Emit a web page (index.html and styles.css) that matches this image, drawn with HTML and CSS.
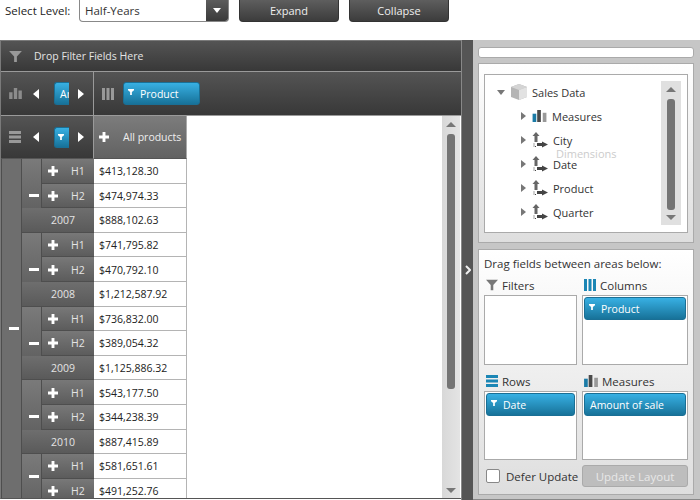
FILE: index.html
```html
<!DOCTYPE html>
<html>
<head>
    <title>Pivot Grid</title>
    <link rel="stylesheet" href="styles.css">
</head>
<body>
    <svg class="defs" width="0" height="0">
        <symbol id="funnel" viewBox="0 0 14 12"><path d="M0 0H14L8.5 6V12H5.500V6Z"/></symbol>
        <symbol id="bars" viewBox="0 0 15 13"><path d="M0 5H4V13H0ZM5.500 0H9.500V13H5.500ZM11 3H15V13H11Z"/></symbol>
        <symbol id="cols" viewBox="0 0 12 12"><path d="M0 0H3V12H0ZM4.500 0H7.500V12H4.500ZM9 0H12V12H9Z"/></symbol>
        <symbol id="rows" viewBox="0 0 12 12"><path d="M0 0H12V3H0ZM0 4.500H12V7.500H0ZM0 9H12V12H0Z"/></symbol>
        <symbol id="plus" viewBox="0 0 9 9"><path d="M3.200 0H5.800V3.200H9V5.800H5.800V9H3.200V5.800H0V3.200H3.200Z"/></symbol>
        <symbol id="left" viewBox="0 0 6 10"><path d="M6 0V10L0 5Z"/></symbol>
        <symbol id="right" viewBox="0 0 6 10"><path d="M0 0V10L6 5Z"/></symbol>
        <symbol id="tag" viewBox="0 0 7 7"><path d="M0 0H7V1.500L4.500 3.500V7H2.500V3.500L0 1.500Z"/></symbol>
        <symbol id="dim" viewBox="0 0 16 16">
            <path d="M4 0L7.500 4H5.500V10H2.500V4H.5Z" fill="#666"/>
            <path d="M10 9.500L16 12.500L10 15.500V14H5V11H10Z" fill="#444"/>
            <path d="M2 11.500V14.500H4.500" fill="none" stroke="#444" stroke-dasharray="1 1"/>
        </symbol>
    </svg>

    <div class="toolbar">
        <span class="level-label">Select Level:</span>
        <div class="combo">
            <span class="combo-text">Half-Years</span>
            <span class="combo-btn"><i></i></span>
        </div>
        <button class="dark-btn">Expand</button>
        <button class="dark-btn">Collapse</button>
    </div>

    <div class="main">
        <div class="pivot">
            <div class="bar filter-bar">
                <svg class="ico-filter"><use href="#funnel"/></svg>
                <span>Drop Filter Fields Here</span>
            </div>
            <div class="bar header-bar">
                <div class="corner">
                    <svg class="ico-bars"><use href="#bars"/></svg>
                    <svg class="nav nav-l"><use href="#left"/></svg>
                    <div class="chip chip-clip"><span>Amount of sale</span></div>
                    <svg class="nav nav-r"><use href="#right"/></svg>
                </div>
                <div class="cols-area">
                    <svg class="ico-cols"><use href="#cols"/></svg>
                    <div class="chip chip-product"><svg class="tag"><use href="#tag"/></svg>Product</div>
                </div>
            </div>
            <div class="table-wrap">
                <div class="table">
                    <div class="head-row">
                        <div class="corner corner-rows">
                            <svg class="ico-rows"><use href="#rows"/></svg>
                            <svg class="nav nav-l"><use href="#left"/></svg>
                            <div class="chip chip-clip chip-icon"><svg class="tag"><use href="#tag"/></svg></div>
                            <svg class="nav nav-r"><use href="#right"/></svg>
                        </div>
                        <div class="all-products"><svg class="plus"><use href="#plus"/></svg><span>All products</span></div>
                    </div>
                    <div class="grid">
                        <div class="cell total-cell"><i class="minus"></i></div>

                        <div class="cell group"><i class="minus"></i></div>
                        <div class="cell half"><svg class="plus"><use href="#plus"/></svg><span>H1</span></div>
                        <div class="val">$413,128.30</div>
                        <div class="cell half"><svg class="plus"><use href="#plus"/></svg><span>H2</span></div>
                        <div class="val">$474,974.33</div>
                        <div class="cell year">2007</div>
                        <div class="val">$888,102.63</div>

                        <div class="cell group"><i class="minus"></i></div>
                        <div class="cell half"><svg class="plus"><use href="#plus"/></svg><span>H1</span></div>
                        <div class="val">$741,795.82</div>
                        <div class="cell half"><svg class="plus"><use href="#plus"/></svg><span>H2</span></div>
                        <div class="val">$470,792.10</div>
                        <div class="cell year">2008</div>
                        <div class="val">$1,212,587.92</div>

                        <div class="cell group"><i class="minus"></i></div>
                        <div class="cell half"><svg class="plus"><use href="#plus"/></svg><span>H1</span></div>
                        <div class="val">$736,832.00</div>
                        <div class="cell half"><svg class="plus"><use href="#plus"/></svg><span>H2</span></div>
                        <div class="val">$389,054.32</div>
                        <div class="cell year">2009</div>
                        <div class="val">$1,125,886.32</div>

                        <div class="cell group"><i class="minus"></i></div>
                        <div class="cell half"><svg class="plus"><use href="#plus"/></svg><span>H1</span></div>
                        <div class="val">$543,177.50</div>
                        <div class="cell half"><svg class="plus"><use href="#plus"/></svg><span>H2</span></div>
                        <div class="val">$344,238.39</div>
                        <div class="cell year">2010</div>
                        <div class="val">$887,415.89</div>

                        <div class="cell group group-last"><i class="minus"></i></div>
                        <div class="cell half"><svg class="plus"><use href="#plus"/></svg><span>H1</span></div>
                        <div class="val">$581,651.61</div>
                        <div class="cell half"><svg class="plus"><use href="#plus"/></svg><span>H2</span></div>
                        <div class="val">$491,252.76</div>
                    </div>
                </div>
                <div class="vscroll">
                    <i class="arrow-up"></i>
                    <div class="thumb"></div>
                    <i class="arrow-down"></i>
                </div>
            </div>
        </div>

        <div class="splitter"><svg class="split-arrow" viewBox="0 0 6 10"><path d="M1 1L5 5L1 9" fill="none" stroke="#eee" stroke-width="2"/></svg></div>

        <div class="side">
            <div class="search"></div>
            <div class="panel tree-panel">
                <div class="tree-box">
                    <div class="tree">
                        <div class="node root">
                            <i class="tri-open"></i>
                            <svg class="cube" viewBox="0 0 16 16">
                                <path d="M8 0L16 3V13L8 16L0 13V3Z" fill="#b5b5b5"/>
                                <path d="M8 0L16 3L8 6L0 3Z" fill="#d4d4d4"/>
                                <path d="M8 6L16 3V13L8 16Z" fill="#e2e2e2"/>
                            </svg>
                            <span>Sales Data</span>
                        </div>
                        <div class="node">
                            <i class="tri"></i>
                            <svg class="measure-ico" viewBox="0 0 15 13">
                                <path d="M0 4H4V13H0Z" fill="#1b7ba6"/>
                                <path d="M5 0H9V13H5Z" fill="#4a4a4a"/>
                                <path d="M11 3H15V13H11Z" fill="#999"/>
                            </svg>
                            <span class="m">Measures</span>
                        </div>
                        <div class="node"><i class="tri"></i><svg class="dim"><use href="#dim"/></svg><span>City</span></div>
                        <div class="node"><i class="tri"></i><svg class="dim"><use href="#dim"/></svg><span>Date</span></div>
                        <div class="node"><i class="tri"></i><svg class="dim"><use href="#dim"/></svg><span>Product</span></div>
                        <div class="node"><i class="tri"></i><svg class="dim"><use href="#dim"/></svg><span>Quarter</span></div>
                    </div>
                    <div class="tree-scroll">
                        <i class="arrow-up"></i>
                        <div class="thumb"></div>
                        <i class="arrow-down"></i>
                    </div>
                    <span class="ghost">Dimensions</span>
                </div>
            </div>
            <div class="panel fields-panel">
                <div class="drag-title">Drag fields between areas below:</div>
                <div class="areas">
                    <div class="area">
                        <div class="area-title"><svg class="t-filter"><use href="#funnel"/></svg>Filters</div>
                        <div class="area-box"></div>
                    </div>
                    <div class="area">
                        <div class="area-title"><svg class="t-cols"><use href="#cols"/></svg>Columns</div>
                        <div class="area-box"><div class="chip field"><svg class="tag"><use href="#tag"/></svg>Product</div></div>
                    </div>
                    <div class="area">
                        <div class="area-title"><svg class="t-rows"><use href="#rows"/></svg>Rows</div>
                        <div class="area-box"><div class="chip field"><svg class="tag"><use href="#tag"/></svg>Date</div></div>
                    </div>
                    <div class="area">
                        <div class="area-title"><svg class="t-meas" viewBox="0 0 15 13"><path d="M0 4H4V13H0Z" fill="#1b7ba6"/><path d="M5 0H9V13H5Z" fill="#4a4a4a"/><path d="M11 3H15V13H11Z" fill="#999"/></svg>Measures</div>
                        <div class="area-box"><div class="chip field field-plain">Amount of sale</div></div>
                    </div>
                </div>
                <div class="foot">
                    <label class="defer"><i class="check"></i>Defer Update</label>
                    <button class="update-btn">Update Layout</button>
                </div>
            </div>
        </div>
    </div>
</body>
</html>
```

FILE: styles.css
```css
* {
    box-sizing: border-box;
}
html, body {
    margin: 0;
    height: 500px;
    overflow: hidden;
}
body {
    background: #fff;
    color: #333;
    font-family: "Open Sans", "Noto Sans", Arial, sans-serif;
    font-size: 11.5px;
}
.defs {
    position: absolute;
}
i {
    display: block;
}

/* top bar */
.toolbar {
    height: 40px;
    display: flex;
    align-items: flex-start;
}
.level-label {
    width: 79px;
    padding: 3px 0 0 5px;
    color: #222;
}
.combo {
    width: 150px;
    height: 22px;
    display: flex;
    border: 1px solid #888;
    border-top: none;
    border-radius: 0 0 4px 4px;
    background: #fff;
    overflow: hidden;
}
.combo-text {
    flex: 1;
    padding: 3px 0 0 5px;
}
.combo-btn {
    width: 22px;
    background: linear-gradient(#5c5c5c, #3a3a3a);
    display: flex;
    align-items: center;
    justify-content: center;
}
.combo-btn i {
    border: 4px solid transparent;
    border-top: 5px solid #fff;
    border-bottom: none;
}
.dark-btn {
    width: 100px;
    height: 22px;
    margin-left: 10px;
    padding: 0;
    border: 1px solid #333;
    border-top: none;
    border-radius: 0 0 4px 4px;
    background: linear-gradient(#5e5e5e, #3c3c3c);
    color: #eee;
    font: inherit;
    font-size: 11px;
}

.main {
    display: flex;
    height: 460px;
}

/* pivot grid */
.pivot {
    width: 461px;
    height: 459px;
    flex: none;
    border: 1px solid #7a7a7a;
    border-bottom: 1px solid #555;
    border-right: none;
    display: flex;
    flex-direction: column;
    background: #fff;
    font-size: 10.5px;
}
.bar {
    display: flex;
    background: linear-gradient(#545454, #383838);
    color: #e4e4e4;
    border-bottom: 1px solid #9a9a9a;
}
.filter-bar {
    height: 31px;
    align-items: center;
}
.ico-filter {
    width: 13px;
    height: 11px;
    margin-left: 8px;
    fill: #999;
}
.filter-bar span {
    margin-left: 12px;
}
.header-bar {
    height: 44px;
}
.corner {
    width: 93px;
    flex: none;
    display: flex;
    align-items: center;
    border-right: 1px solid #9a9a9a;
}
.ico-bars {
    width: 15px;
    height: 11px;
    margin-left: 7px;
    fill: #8c8c8c;
}
.ico-rows {
    width: 12px;
    height: 12px;
    margin-left: 8px;
    fill: #999;
}
.nav {
    width: 6px;
    height: 10px;
    fill: #fff;
    flex: none;
}
.nav-l {
    margin-left: 10px;
}
.nav-r {
    margin-left: 9px;
}
.ico-rows + .nav-l {
    margin-left: 12px;
}
.chip {
    background: linear-gradient(#38b0e3, #177299);
    color: #fff;
    border: 1px solid #1a6f95;
    border-radius: 3px;
    display: flex;
    align-items: center;
    font-size: 10.5px;
}
.chip-clip {
    width: 15px;
    height: 23px;
    margin-left: 15px;
    overflow: hidden;
    border-radius: 3px 0 0 3px;
    border-right: none;
    padding-left: 5px;
    white-space: nowrap;
}
.chip-icon {
    height: 21px;
    padding-left: 3px;
}
.tag {
    width: 6px;
    height: 6px;
    fill: #fff;
    flex: none;
    margin-right: 6px;
    position: relative;
    top: -2px;
}
.chip-icon .tag {
    top: 0;
}
.cols-area {
    flex: 1;
    display: flex;
    align-items: center;
}
.ico-cols {
    width: 12px;
    height: 12px;
    margin-left: 8px;
    fill: #999;
}
.chip-product {
    width: 77px;
    height: 23px;
    margin-left: 9px;
    padding-left: 4px;
}
.table-wrap {
    flex: 1;
    display: flex;
    min-height: 0;
    overflow: hidden;
}
.table {
    flex: 1;
    overflow: hidden;
}
.head-row {
    display: flex;
    height: 43px;
}
.corner-rows {
    background: linear-gradient(#545454, #383838);
    border-bottom: 1px solid #555;
}
.all-products {
    width: 93px;
    display: flex;
    align-items: center;
    padding-left: 5px;
    background: linear-gradient(#7c7c7c, #626262);
    color: #eee;
    border-right: 1px solid #aaa;
    border-bottom: 1px solid #555;
}
.all-products span {
    margin-left: 14px;
    white-space: nowrap;
}
.plus {
    width: 10px;
    height: 10px;
    fill: #fff;
    flex: none;
}
.grid {
    display: grid;
    grid-template-columns: 20px 20px 53px 93px;
    grid-template-rows: repeat(14, 24.6px);
    grid-auto-flow: dense;
}
.cell {
    display: flex;
    align-items: center;
    color: #e4e4e4;
    border-left: 1px solid #4e4e4e;
    border-bottom: 1px solid #4e4e4e;
}
.total-cell {
    grid-column: 1;
    grid-row: 1 / span 14;
    justify-content: center;
    padding: 0 0 6px 4px;
    background: #6e6e6e;
    border-bottom: none;
}
.group {
    grid-column: 2;
    grid-row: span 2;
    justify-content: center;
    padding: 24px 0 0 4px;
    background: linear-gradient(#7a7a7a, #636363);
    border-bottom: none;
}
.group-last {
    padding: 0 0 5px 4px;
}
.half {
    grid-column: 3;
    padding: 1px 0 0 6px;
    background: linear-gradient(#787878, #5c5c5c);
}
.half span {
    margin-left: 13px;
}
.year {
    grid-column: 2 / span 2;
    padding: 1px 0 0 29px;
    background: linear-gradient(#6e6e6e, #5a5a5a);
}
.val {
    grid-column: 4;
    display: flex;
    align-items: center;
    padding: 1px 0 0 5px;
    border-bottom: 1px solid #b4b4b4;
    border-right: 1px solid #b4b4b4;
    color: #222;
    background: #fff;
}
.minus {
    width: 10px;
    height: 3px;
    background: #fff;
}
.vscroll {
    width: 19px;
    flex: none;
    display: flex;
    flex-direction: column;
    align-items: center;
    background: linear-gradient(90deg, #d8d8d8, #e4e4e4);
    padding: 6px 0 5px;
    border-right: 1px solid #fff;
}
.arrow-up, .arrow-down {
    flex: none;
    border: 5px solid transparent;
}
.arrow-up {
    border-bottom: 5px solid #777;
    border-top: none;
}
.arrow-down {
    border-top: 5px solid #777;
    border-bottom: none;
}
.thumb {
    flex: 1;
    width: 8px;
    margin: 7px 0 5px;
    border-radius: 3px;
    background: #747474;
}
.vscroll .thumb {
    flex: none;
    height: 255px;
    margin-bottom: auto;
}

.splitter {
    width: 12px;
    flex: none;
    background: #555;
    border-left: 1px solid #888;
    display: flex;
    align-items: center;
    justify-content: center;
}
.split-arrow {
    width: 6px;
    height: 10px;
}

/* right side */
.side {
    flex: 1;
    padding: 7px 6px 4px 5px;
    background: #c6c6c6;
    display: flex;
    flex-direction: column;
    border-bottom: 1px solid #888;
}
.search {
    height: 11px;
    background: #fff;
    border: 1px solid #aaa;
    border-radius: 3px;
}
.panel {
    background: linear-gradient(#fff, #dedede);
    border: 1px solid #aaa;
}
.tree-panel {
    height: 180px;
    margin-top: 5px;
    padding: 10px 5px;
}
.tree-box {
    position: relative;
    height: 159px;
    background: #fff;
    border: 1px solid #aaa;
    display: flex;
}
.tree {
    flex: 1;
    padding-top: 5px;
}
.node {
    height: 24px;
    display: flex;
    align-items: center;
    padding-left: 36px;
    color: #333;
    font-size: 11px;
}
.root {
    padding-left: 12px;
}
.tri {
    border: 4px solid transparent;
    border-left: 5px solid #777;
    border-right: none;
    margin-right: 6px;
}
.tri-open {
    border: 4px solid transparent;
    border-top: 5px solid #777;
    border-bottom: none;
    margin-right: 6px;
}
.cube {
    width: 16px;
    height: 16px;
    margin-right: 5px;
}
.measure-ico {
    width: 15px;
    height: 12px;
    margin-right: 5px;
}
.dim {
    width: 16px;
    height: 16px;
    margin-right: 5px;
}
.tree-scroll {
    width: 20px;
    margin: 6px 6px 7px 0;
    display: flex;
    flex-direction: column;
    align-items: center;
    background: #e0e0e0;
    padding: 6px 0 5px;
}
.ghost {
    position: absolute;
    left: 71px;
    top: 71px;
    color: #ccc;
    font-size: 11px;
}
.fields-panel {
    flex: 1;
    margin-top: 6px;
    padding: 6px 5px 0;
}
.drag-title {
    color: #333;
}
.areas {
    margin-top: 6px;
    display: grid;
    grid-template-columns: 93px 106px;
    gap: 8px 5px;
}
.area-title {
    height: 18px;
    display: flex;
    align-items: center;
    padding: 0 0 2px 2px;
    gap: 4px;
}
.area-title svg {
    width: 12px;
    height: 12px;
    flex: none;
}
.t-filter {
    fill: #777;
}
.t-cols, .t-rows {
    fill: #1b86b5;
}
.area-title .t-meas {
    width: 14px;
}
.area-box {
    height: 70px;
    background: #fff;
    border: 1px solid #aaa;
    padding: 1px;
}
.area:nth-child(n+3) .area-box {
    height: 69px;
}
.area-box .field {
    height: 23px;
    padding-left: 4px;
}
.area-box .field-plain {
    padding-left: 5px;
}
.foot {
    margin-top: 5px;
    display: flex;
    align-items: center;
    height: 22px;
}
.defer {
    width: 98px;
    display: flex;
    align-items: center;
    padding-left: 2px;
}
.check {
    width: 14px;
    height: 14px;
    margin-right: 6px;
    background: #fff;
    border: 1px solid #888;
    border-radius: 2px;
}
.update-btn {
    width: 106px;
    height: 22px;
    padding: 0;
    border: 1px solid #aaa;
    border-radius: 3px;
    background: #bdbdbd;
    color: #e8e8e8;
    font: inherit;
}
```
